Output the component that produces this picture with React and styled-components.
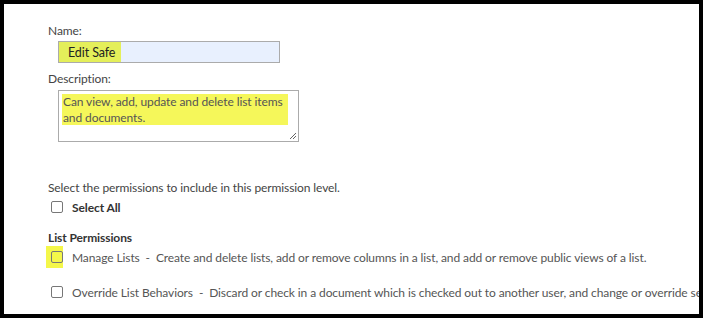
import styled, { createGlobalStyle } from 'styled-components';

const GlobalStyle = createGlobalStyle`
  html, body {
    margin: 0;
    padding: 0;
    background: #000;
  }
`;

const Frame = styled.div`
  box-sizing: border-box;
  width: 703px;
  height: 318px;
  border: 4px solid #000;
  background: #fff;
  overflow: hidden;
  font-family: Lato, 'Open Sans', sans-serif;
  font-size: 12px;
  letter-spacing: -0.1px;
  color: #444;
`;

const Content = styled.div`
  padding: 18px 0 0 44px;
  white-space: nowrap;
`;

const Label = styled.div`
  line-height: 17px;
  height: 17px;
`;

const NameInput = styled.div`
  box-sizing: border-box;
  width: 222px;
  height: 22px;
  margin: 2px 0 0 10px;
  border: 1px solid #ababab;
  background: #e8f0fe;
  display: flex;
  align-items: stretch;
`;

const NameMark = styled.span`
  display: flex;
  align-items: center;
  padding: 0 6px 0 9px;
  background: #e4ef5a;
  color: #222;
  font-size: 12.5px;
`;

const DescLabel = styled(Label)`
  margin-top: 7px;
`;

const TextArea = styled.div`
  position: relative;
  box-sizing: border-box;
  width: 241px;
  height: 52px;
  margin: 3px 0 0 10px;
  border: 1px solid #ababab;
  padding: 3px 10px 0 3px;
  white-space: normal;
`;

const DescMark = styled.div`
  background: #f5f75a;
  padding: 0 0 0 1px;
  line-height: 15.5px;
  color: #555;
`;

const Grip = styled.svg`
  position: absolute;
  right: 1px;
  bottom: 1px;
`;

const Intro = styled.div`
  margin-top: 38px;
  line-height: 16px;
`;

const CheckRow = styled.div`
  display: flex;
  align-items: center;
  height: 22px;
  margin-top: ${(p) => p.$mt || 0}px;
`;

const BoxWrap = styled.div`
  display: flex;
  align-items: center;
  box-sizing: border-box;
  width: 17px;
  height: 22px;
  margin-left: -2px;
  padding-left: 5px;
  background: ${(p) => (p.$marked ? '#f4f74a' : 'transparent')};
`;

const Box = styled.div`
  box-sizing: border-box;
  width: 12px;
  height: 12px;
  border: 1px solid #777;
  border-radius: 2px;
`;

const CheckText = styled.span`
  margin-left: 9px;
  font-weight: ${(p) => (p.$bold ? 700 : 400)};
  color: ${(p) => (p.$bold ? '#333' : '#555')};
`;

const SectionTitle = styled.div`
  margin-top: 12px;
  font-weight: 700;
  color: #333;
  line-height: 16px;
`;

const Check = ({ marked, bold, children, mt }) => (
  <CheckRow $mt={mt}>
    <BoxWrap $marked={marked}>
      <Box />
    </BoxWrap>
    <CheckText $bold={bold}>{children}</CheckText>
  </CheckRow>
);

export default function App() {
  return (
    <>
      <GlobalStyle />
      <Frame>
        <Content>
          <Label>Name:</Label>
          <NameInput>
            <NameMark>Edit Safe</NameMark>
          </NameInput>
          <DescLabel>Description:</DescLabel>
          <TextArea>
            <DescMark>
              Can view, add, update and delete list items and documents.
            </DescMark>
            <Grip width="8" height="8" viewBox="0 0 8 8">
              <path d="M7 1L1 7M7 4L4 7" stroke="#666" strokeWidth="1" />
            </Grip>
          </TextArea>
          <Intro>Select the permissions to include in this permission level.</Intro>
          <Check bold>Select All</Check>
          <SectionTitle>List Permissions</SectionTitle>
          <Check marked>
            Manage Lists&nbsp; -&nbsp; Create and delete lists, add or remove columns in a list, and add or remove public views of a list.
          </Check>
          <Check mt={13}>
            Override List Behaviors&nbsp; -&nbsp; Discard or check in a document which is checked out to another user, and change or override settings.
          </Check>
        </Content>
      </Frame>
    </>
  );
}
